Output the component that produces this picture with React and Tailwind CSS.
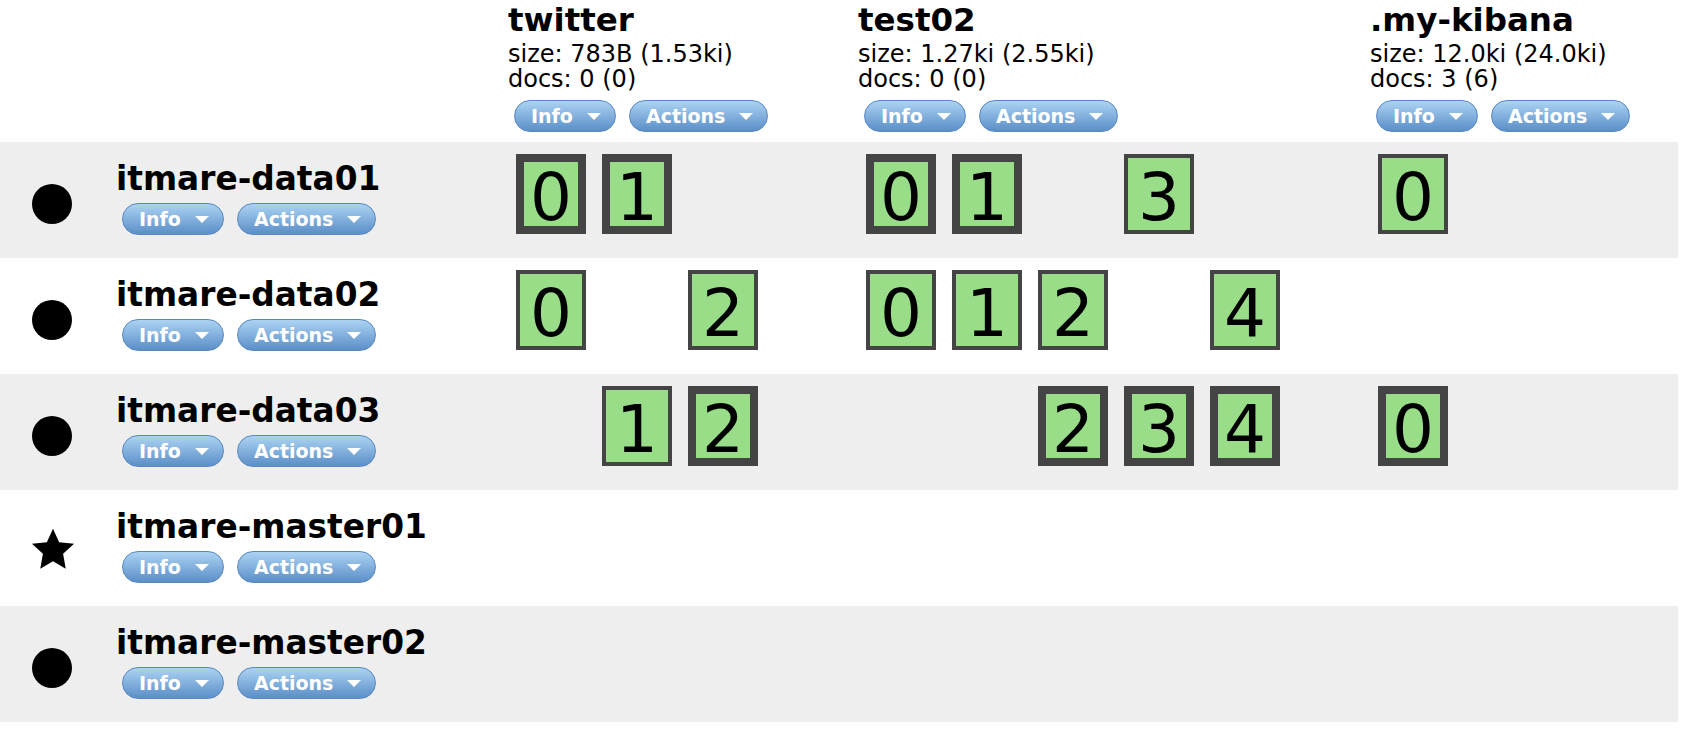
import React from 'react';

const indices = [
    { key: 'twitter', name: 'twitter', size: '783B (1.53ki)', docs: '0 (0)', count: 3 },
    { key: 'test02', name: 'test02', size: '1.27ki (2.55ki)', docs: '0 (0)', count: 5 },
    { key: 'kibana', name: '.my-kibana', size: '12.0ki (24.0ki)', docs: '3 (6)', count: 1 },
];

// p = primary, r = replica
const nodes = [
    { name: 'itmare-data01', icon: 'dot', shards: { twitter: { 0: 'p', 1: 'p' }, test02: { 0: 'p', 1: 'p', 3: 'r' }, kibana: { 0: 'r' } } },
    { name: 'itmare-data02', icon: 'dot', shards: { twitter: { 0: 'r', 2: 'r' }, test02: { 0: 'r', 1: 'r', 2: 'r', 4: 'r' }, kibana: {} } },
    { name: 'itmare-data03', icon: 'dot', shards: { twitter: { 1: 'r', 2: 'p' }, test02: { 2: 'p', 3: 'p', 4: 'p' }, kibana: { 0: 'p' } } },
    { name: 'itmare-master01', icon: 'star', shards: { twitter: {}, test02: {}, kibana: {} } },
    { name: 'itmare-master02', icon: 'dot', shards: { twitter: {}, test02: {}, kibana: {} } },
];

const cols = 'grid grid-cols-[507px_350px_512px_309px] w-[1678px]';

const DropButton = ({ label }) => (
    <button className="flex items-center h-[32px] pl-[16px] pr-[14px] rounded-full border border-[#5887c2] bg-linear-to-b from-[#acd3f2] to-[#5b8fc8] text-white text-[19px] font-bold leading-none">
        <span>{label}</span>
        <svg width="14" height="7" viewBox="0 0 14 7" className="ml-[14px]">
            <polygon points="0,0 14,0 7,7" fill="#ffffff" />
        </svg>
    </button>
);

const ButtonRow = ({ className = '' }) => (
    <div className={`flex gap-[13px] ${className}`}>
        <DropButton label="Info" />
        <DropButton label="Actions" />
    </div>
);

const Shard = ({ num, type }) => (
    <div
        className={`w-[70px] h-[80px] flex items-center justify-center bg-[#99dd88] border-[#444444] pt-[7px] text-[66px] leading-none text-black ${
            type === 'p' ? 'border-8' : 'border-4'
        }`}
    >
        {num}
    </div>
);

const NodeIcon = ({ icon }) =>
    icon === 'star' ? (
        <svg width="44" height="43" viewBox="0 0 100 98" className="mt-[37px] -ml-[1px]">
            <polygon points="50,4 64,35 98,38 73,61 79,95 50,78 21,95 27,61 2,38 36,35" fill="#000000" />
        </svg>
    ) : (
        <div className="mt-[42px] w-[40px] h-[40px] rounded-full bg-black" />
    );

export default function App() {
    return (
        <div className="min-h-screen bg-white text-black font-['DejaVu_Sans','Verdana',sans-serif]">
            {/* index header */}
            <div className={`${cols} h-[142px]`}>
                <div />
                {indices.map(idx => (
                    <div key={idx.key} className="flex flex-col pl-[1px]">
                        <div className="text-[32.5px] font-bold leading-[40px] whitespace-nowrap">{idx.name}</div>
                        <div className="mt-[2px] text-[24px] leading-[25px] whitespace-nowrap">size: {idx.size}</div>
                        <div className="text-[24px] leading-[25px] whitespace-nowrap">docs: {idx.docs}</div>
                        <ButtonRow className="mt-[8px] ml-[6px]" />
                    </div>
                ))}
            </div>

            {nodes.map((node, i) => (
                <div key={node.name} className={`${cols} h-[116px] ${i % 2 === 0 ? 'bg-[#eeeeee]' : 'bg-white'}`}>
                    <div className="flex">
                        <div className="w-[116px] pl-[32px] flex items-start">
                            <NodeIcon icon={node.icon} />
                        </div>
                        <div className="flex flex-col pt-[17px]">
                            <div className="text-[32.8px] font-bold leading-[40px] whitespace-nowrap">{node.name}</div>
                            <ButtonRow className="mt-[4px] ml-[6px]" />
                        </div>
                    </div>
                    {indices.map(idx => (
                        <div key={idx.key} className="flex gap-[16px] pl-[9px] pt-[12px]">
                            {Array.from({ length: idx.count }).map((_, n) =>
                                node.shards[idx.key][n] ? (
                                    <Shard key={n} num={n} type={node.shards[idx.key][n]} />
                                ) : (
                                    <div key={n} className="w-[70px] h-[80px]" />
                                )
                            )}
                        </div>
                    ))}
                </div>
            ))}
        </div>
    );
}
